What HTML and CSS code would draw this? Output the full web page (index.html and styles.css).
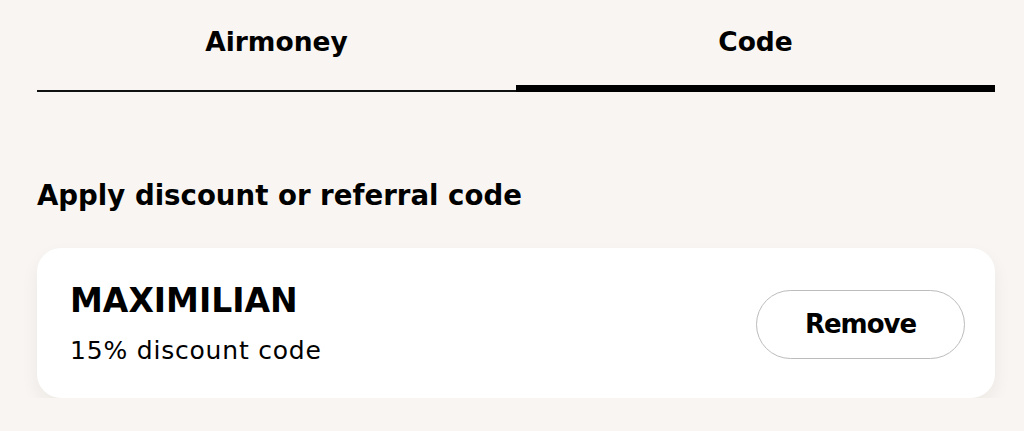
FILE: index.html
```html
<!DOCTYPE html>
<html lang="en">
<head>
<meta charset="utf-8">
<title>Discount</title>
<link rel="stylesheet" href="styles.css">
</head>
<body>
<main class="page">
  <nav class="tabs">
    <div class="tab">Airmoney</div>
    <div class="tab tab-active">Code</div>
  </nav>
  <h2 class="heading">Apply discount or referral code</h2>
  <section class="card">
    <div class="card-info">
      <div class="code-name">MAXIMILIAN</div>
      <div class="code-desc">15% discount code</div>
    </div>
    <button class="remove-btn" type="button">Remove</button>
  </section>
</main>
</body>
</html>
```
FILE: styles.css
```css
* { box-sizing: border-box; }
html, body {
  margin: 0;
  padding: 0;
  background: #f8f5f2;
}
body {
  font-family: "DejaVu Sans", Inter, sans-serif;
  color: #000;
}
.page {
  padding: 0 29px 0 37px;
}
.tabs {
  display: grid;
  grid-template-columns: 1fr 1fr;
}
.tab {
  height: 92px;
  padding-top: 26px;
  text-align: center;
  font-size: 26.5px;
  line-height: 32px;
  font-weight: 700;
  border-bottom: 2px solid #111;
}
.tab-active {
  border-bottom: 7px solid #000;
}
.heading {
  margin: 86px 0 0;
  font-size: 27.6px;
  line-height: 36px;
  font-weight: 700;
}
.card {
  margin-top: 34px;
  background: #fff;
  border-radius: 24px;
  box-shadow: 0 8px 18px rgba(60, 40, 20, 0.06);
  padding: 34px 30px 32px 33px;
  display: flex;
  align-items: center;
  justify-content: space-between;
}
.code-name {
  font-size: 33px;
  line-height: 38px;
  font-weight: 700;
}
.code-desc {
  margin-top: 16px;
  font-size: 25px;
  line-height: 30px;
  font-weight: 400;
  letter-spacing: 0.8px;
}
.remove-btn {
  width: 209px;
  height: 69px;
  border: 1.5px solid #bcbcbc;
  border-radius: 35px;
  background: #fff;
  font-family: inherit;
  font-size: 26px;
  font-weight: 700;
  letter-spacing: -1px;
  color: #000;
  padding: 0;
}
```
